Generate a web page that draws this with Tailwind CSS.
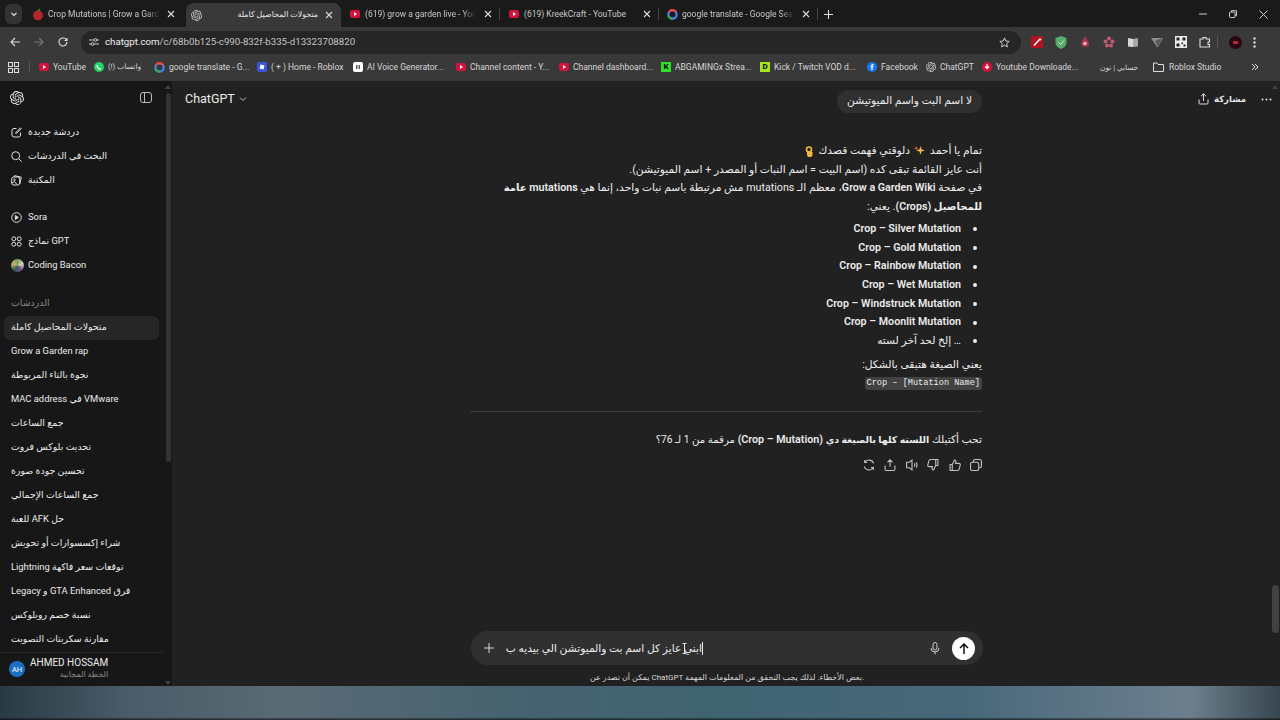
<!DOCTYPE html>
<html>
<head>
<meta charset="utf-8">
<script src="https://cdn.jsdelivr.net/npm/@tailwindcss/browser@4"></script>
<title>ChatGPT</title>
</head>
<body class="w-[1280px] h-[720px] overflow-hidden bg-[#1b1b1b] text-[#e6e6e6] [font-family:'Roboto','DejaVu_Sans',sans-serif]">

<!-- tab strip -->
<div class="h-[27px] flex items-start bg-[#1a1a1a] text-[8.5px] text-[#c8c8c8] pt-[3px]">
  <div class="w-[29px] h-[22px] flex items-center pl-[5px]"><div class="w-[17px] h-[20px] rounded-[6px] bg-[#333] flex items-center justify-center"><svg width="8" height="8" viewBox="0 0 8 8" fill="none" stroke="#ddd" stroke-width="1.2"><path d="M1.500 3l2.500 2.500L6.500 3"/></svg></div></div>
  <div class="w-[157px] h-[22px] flex items-center pl-[3px]">
    <svg width="12" height="13" viewBox="0 0 12 13" class="mr-[4px]"><circle cx="6" cy="7.500" r="5" fill="#b3262b"/><path d="M6 3l2-2" stroke="#4a8a2a" stroke-width="1.500"/></svg>
    <span class="w-[112px] whitespace-nowrap [mask-image:linear-gradient(90deg,#000_88%,transparent)]">Crop Mutations | Grow a Garde</span>
    <svg width="8" height="8" viewBox="0 0 8 8" stroke="#ddd" stroke-width="1.100" class="ml-[7px]"><path d="M1 1l6 6M7 1L1 7"/></svg>
  </div>
  <div class="w-[155px] h-[24px] flex items-center pl-[5px] bg-[#393939] rounded-t-[8px]">
    <svg width="11" height="11" viewBox="0 0 24 24" fill="#cfcfcf"><path d="M22.2819 9.8211a5.9847 5.9847 0 0 0-.5157-4.9108 6.0462 6.0462 0 0 0-6.5098-2.9A6.0651 6.0651 0 0 0 4.9807 4.1818a5.9847 5.9847 0 0 0-3.9977 2.9 6.0462 6.0462 0 0 0 .7427 7.0966 5.98 5.98 0 0 0 .511 4.9107 6.051 6.051 0 0 0 6.5146 2.9001A5.9847 5.9847 0 0 0 13.2599 24a6.0557 6.0557 0 0 0 5.7718-4.2058 5.9894 5.9894 0 0 0 3.9977-2.9001 6.0557 6.0557 0 0 0-.7475-7.0729zm-9.022 12.6081a4.4755 4.4755 0 0 1-2.8764-1.0408l.1419-.0804 4.7783-2.7582a.7948.7948 0 0 0 .3927-.6813v-6.7369l2.02 1.1686a.071.071 0 0 1 .038.052v5.5826a4.504 4.504 0 0 1-4.4945 4.4944zm-9.6607-4.1254a4.4708 4.4708 0 0 1-.5346-3.0137l.142.0852 4.783 2.7582a.7712.7712 0 0 0 .7806 0l5.8428-3.3685v2.3324a.0804.0804 0 0 1-.0332.0615L9.74 19.9502a4.4992 4.4992 0 0 1-6.1408-1.6464zM2.3408 7.8956a4.485 4.485 0 0 1 2.3655-1.9728V11.6a.7664.7664 0 0 0 .3879.6765l5.8144 3.3543-2.0201 1.1685a.0757.0757 0 0 1-.071 0l-4.8303-2.7865A4.504 4.504 0 0 1 2.3408 7.872zm16.5963 3.8558L13.1038 8.364 15.1192 7.2a.0757.0757 0 0 1 .071 0l4.8303 2.7913a4.4944 4.4944 0 0 1-.6765 8.1042v-5.6772a.79.79 0 0 0-.407-.667zm2.0107-3.0231l-.142-.0852-4.7735-2.7818a.7759.7759 0 0 0-.7854 0L9.409 9.2297V6.8974a.0662.0662 0 0 1 .0284-.0615l4.8303-2.7866a4.4992 4.4992 0 0 1 6.6802 4.66zM8.3065 12.863l-2.02-1.1638a.0804.0804 0 0 1-.038-.0567V6.0742a4.4992 4.4992 0 0 1 7.3757-3.4537l-.142.0805L8.704 5.459a.7948.7948 0 0 0-.3927.6813zm1.0976-2.3654l2.602-1.4998 2.6069 1.4998v2.9994l-2.5974 1.4997-2.6067-1.4997Z"/></svg>
    <span dir="rtl" class="w-[116px] text-[#e8e8e8] whitespace-nowrap text-[7.9px]">متحولات المحاصيل كاملة</span>
    <svg width="8" height="8" viewBox="0 0 8 8" stroke="#ddd" stroke-width="1.100" class="ml-[7px]"><path d="M1 1l6 6M7 1L1 7"/></svg>
  </div>
  <div class="w-[159px] h-[22px] flex items-center pl-[9px]">
    <svg width="10" height="8" viewBox="0 0 10 8" class="mr-[5px]"><rect width="10" height="8" rx="2" fill="#d5123b"/><path d="M4 2l3 2-3 2z" fill="#fff"/></svg>
    <span class="w-[111px] whitespace-nowrap [mask-image:linear-gradient(90deg,#000_88%,transparent)]">(619) grow a garden live - YouT</span>
    <svg width="8" height="8" viewBox="0 0 8 8" stroke="#ddd" stroke-width="1.100" class="ml-[8px]"><path d="M1 1l6 6M7 1L1 7"/></svg>
    <span class="ml-auto w-[1px] h-[12px] bg-[#444]"></span>
  </div>
  <div class="w-[159px] h-[22px] flex items-center pl-[9px]">
    <svg width="10" height="8" viewBox="0 0 10 8" class="mr-[5px]"><rect width="10" height="8" rx="2" fill="#d5123b"/><path d="M4 2l3 2-3 2z" fill="#fff"/></svg>
    <span class="w-[118px] whitespace-nowrap">(619) KreekCraft - YouTube</span>
    <svg width="8" height="8" viewBox="0 0 8 8" stroke="#ddd" stroke-width="1.100" class="ml-[1px]"><path d="M1 1l6 6M7 1L1 7"/></svg>
    <span class="ml-auto w-[1px] h-[12px] bg-[#444]"></span>
  </div>
  <div class="w-[159px] h-[22px] flex items-center pl-[8px]">
    <svg width="11" height="11" viewBox="0 0 12 12" class="mr-[4px]"><circle cx="6" cy="6" r="4.500" fill="none" stroke="#4285f4" stroke-width="2.400"/><path d="M2 3.500A4.500 4.500 0 0 1 10 3.500" fill="none" stroke="#ea4335" stroke-width="2.400"/><path d="M1.600 7.500A4.500 4.500 0 0 0 6 10.500" fill="none" stroke="#34a853" stroke-width="2.400"/></svg>
    <span class="w-[112px] whitespace-nowrap [mask-image:linear-gradient(90deg,#000_88%,transparent)]">google translate - Google Sean</span>
    <svg width="8" height="8" viewBox="0 0 8 8" stroke="#ddd" stroke-width="1.100" class="ml-[8px]"><path d="M1 1l6 6M7 1L1 7"/></svg>
    <span class="ml-auto w-[1px] h-[12px] bg-[#444]"></span>
  </div>
  <div class="h-[22px] flex items-center pl-[6px]"><svg width="9" height="9" viewBox="0 0 9 9" stroke="#ddd" stroke-width="1.100"><path d="M4.500 0v9M0 4.500h9"/></svg></div>
  <div class="ml-auto h-[22px] flex items-center pr-[12px] gap-[22px]">
    <svg width="8" height="8" viewBox="0 0 8 8" stroke="#ccc"><path d="M0 4h8"/></svg>
    <svg width="8" height="8" viewBox="0 0 8 8" stroke="#ccc" fill="none"><rect x=".5" y="2" width="5.500" height="5.500" rx="1"/><path d="M2.500 2V.7h5v5H6"/></svg>
    <svg width="9" height="9" viewBox="0 0 9 9" stroke="#ccc"><path d="M.5.5l8 8M8.500.5l-8 8"/></svg>
  </div>
</div>

<!-- toolbar -->
<div class="h-[28px] bg-[#393939] flex items-center pt-[2px]">
  <div class="w-[81px] flex items-center pl-[10px] gap-[14px]">
    <svg width="10" height="10" viewBox="0 0 10 10" stroke="#ddd" fill="none" stroke-width="1.100"><path d="M10 5H1M5 1L1 5l4 4"/></svg>
    <svg width="10" height="10" viewBox="0 0 10 10" stroke="#777" fill="none" stroke-width="1.100"><path d="M0 5h9M5 1l4 4-4 4"/></svg>
    <svg width="10" height="10" viewBox="0 0 10 10" stroke="#ddd" fill="none" stroke-width="1.100"><path d="M8.600 3.200A4 4 0 1 0 9 5M9 1v2.500H6.500"/></svg>
  </div>
  <div class="w-[940px] h-[23px] rounded-full bg-[#262626] flex items-center pl-[5px]">
    <svg width="12" height="12" viewBox="0 0 12 12" stroke="#ccc" fill="none" class="mr-[5px] ml-[2px]"><path d="M1 4h5M9 4h2M1 8h2M6 8h5"/><circle cx="7.500" cy="4" r="1.400"/><circle cx="4.500" cy="8" r="1.400"/></svg>
    <span class="text-[9.7px] text-[#c4c4c4]"><span class="text-[#f0f0f0]">chatgpt.com</span>/c/68b0b125-c990-832f-b335-d13323708820</span>
    <svg width="11" height="11" viewBox="0 0 12 12" stroke="#ddd" fill="none" class="ml-auto mr-[11px]"><path d="M6 1l1.500 3.400 3.600.4-2.700 2.400.8 3.600L6 9l-3.200 1.800.8-3.600L.9 4.800l3.600-.4z"/></svg>
  </div>
  <div class="flex items-center flex-1 pl-[10px]">
    <div class="w-[24px]"><svg width="12" height="12" viewBox="0 0 12 12"><rect width="12" height="12" rx="1" fill="#b3121f"/><path d="M3 9.500L8 4" stroke="#fff" stroke-width="1.500"/><path d="M9 1.500l.6 1.400L11 3.500l-1.400.6L9 5.500l-.6-1.400L7 3.500l1.400-.6z" fill="#fff"/></svg></div>
    <div class="w-[24px]"><svg width="12" height="13" viewBox="0 0 12 13"><path d="M6 0l5.500 2v4.500C11.500 10 8.500 12 6 13 3.500 12 .5 10 .5 6.500V2z" fill="#56ad6a"/><path d="M3.500 6.500l2 2 3.500-4" fill="none" stroke="#d8f0dc"/></svg></div>
    <div class="w-[24px]"><svg width="12" height="12" viewBox="0 0 12 12"><path d="M6 0l4 7a4 4 0 1 1-8 0z" fill="#a8344f"/><circle cx="6" cy="7.500" r="1.800" fill="#e8b4c0"/></svg></div>
    <div class="w-[24px]"><svg width="12" height="12" viewBox="0 0 12 12" fill="#c05a72"><circle cx="6" cy="2.500" r="2"/><circle cx="2.500" cy="5.500" r="2"/><circle cx="9.500" cy="5.500" r="2"/><circle cx="4" cy="9.500" r="2"/><circle cx="8" cy="9.500" r="2"/></svg></div>
    <div class="w-[24px]"><svg width="12" height="11" viewBox="0 0 12 11"><path d="M1 1l5 1v8l-5-.5z" fill="#d8d8d8"/><path d="M6 2l5-1v8.500L6 10z" fill="#a8a8a8"/></svg></div>
    <div class="w-[24px]"><svg width="12" height="11" viewBox="0 0 12 11"><path d="M0 1h12L7 10H6z" fill="#8e8e8e"/><path d="M4 4l7-3-4 9z" fill="#5a5a5a"/></svg></div>
    <div class="w-[24px]"><svg width="12" height="12" viewBox="0 0 12 12"><rect width="12" height="12" fill="#ececec"/><path d="M1.500 1.500h3v3h-3zM7.500 1.500h3v3h-3zM1.500 7.500h3v3h-3zM6.500 6.500h1.500v1.500h-1.500zM8.500 8.500h2v2h-2z" fill="#222"/></svg></div>
    <div class="w-[18px]"><svg width="12" height="12" viewBox="0 0 12 12" stroke="#ddd" fill="none" stroke-width="1.100"><path d="M1 3h3V1.500h3V3h3.500v3H9v2.500h1.500V11H1z"/></svg></div>
    <div class="w-[1px] h-[12px] bg-[#555] mr-[11px]"></div>
    <div class="w-[24px]"><span class="w-[13px] h-[13px] rounded-full bg-[#2b0711] flex items-center justify-center"><span class="w-[5px] h-[3px] bg-[#b02a3a]"></span></span></div>
    <svg width="3" height="11" viewBox="0 0 3 11" fill="#ddd"><circle cx="1.500" cy="1.500" r="1.200"/><circle cx="1.500" cy="5.500" r="1.200"/><circle cx="1.500" cy="9.500" r="1.200"/></svg>
  </div>
</div>

<!-- bookmarks -->
<div class="h-[26px] bg-[#393939] flex items-center text-[8.5px] text-[#d6d6d6] whitespace-nowrap pb-[2px]">
  <div class="w-[29px] pl-[8px]"><svg width="11" height="11" viewBox="0 0 11 11" fill="none" stroke="#ddd"><rect x=".5" y=".5" width="4" height="4"/><rect x="6.500" y=".5" width="4" height="4"/><rect x=".5" y="6.500" width="4" height="4"/><rect x="6.500" y="6.500" width="4" height="4"/></svg></div>
  <div class="w-[1px] h-[12px] bg-[#555] mr-[9px]"></div>
  <div class="w-[55px] flex items-center gap-[4px]"><svg width="10" height="8" viewBox="0 0 10 8"><rect width="10" height="8" rx="2" fill="#d5123b"/><path d="M4 2l3 2-3 2z" fill="#fff"/></svg>YouTube</div>
  <div class="w-[60px] flex items-center gap-[4px]"><svg width="10" height="10" viewBox="0 0 10 10"><circle cx="5" cy="5" r="5" fill="#25d366"/><path d="M3 3c0 2.500 1.500 4 4 4" fill="none" stroke="#fff" stroke-width="1.300"/></svg><span dir="rtl" class="text-[7.6px]">واتساب (!)</span></div>
  <div class="w-[103px] flex items-center gap-[4px]"><svg width="11" height="11" viewBox="0 0 12 12"><circle cx="6" cy="6" r="4.500" fill="none" stroke="#4285f4" stroke-width="2.400"/><path d="M2 3.500A4.500 4.500 0 0 1 10 3.500" fill="none" stroke="#ea4335" stroke-width="2.400"/><path d="M1.600 7.500A4.500 4.500 0 0 0 6 10.500" fill="none" stroke="#34a853" stroke-width="2.400"/></svg>google translate - G...</div>
  <div class="w-[96px] flex items-center gap-[4px]"><svg width="10" height="10" viewBox="0 0 10 10"><rect width="10" height="10" rx="2" fill="#3b55d9"/><rect x="3" y="3" width="4" height="4" fill="#fff" transform="rotate(15 5 5)"/></svg>( + ) Home - Roblox</div>
  <div class="w-[103px] flex items-center gap-[4px]"><svg width="10" height="10" viewBox="0 0 10 10"><rect width="10" height="10" rx="2" fill="#fff"/><path d="M3.800 3v4M6.200 3v4" stroke="#111"/></svg>AI Voice Generator...</div>
  <div class="w-[103px] flex items-center gap-[4px]"><svg width="10" height="8" viewBox="0 0 10 8"><rect width="10" height="8" rx="2" fill="#d5123b"/><path d="M4 2l3 2-3 2z" fill="#fff"/></svg>Channel content - Y...</div>
  <div class="w-[102px] flex items-center gap-[4px]"><svg width="10" height="8" viewBox="0 0 10 8"><rect width="10" height="8" rx="2" fill="#d5123b"/><path d="M4 2l3 2-3 2z" fill="#fff"/></svg>Channel dashboard...</div>
  <div class="w-[99px] flex items-center gap-[4px]"><span class="w-[10px] h-[10px] bg-[#2fe02a] text-black text-[8px] font-bold leading-[10px] text-center">K</span>ABGAMINGx Strea...</div>
  <div class="w-[107px] flex items-center gap-[4px]"><span class="w-[10px] h-[10px] bg-[#a5e51f] text-black text-[8px] font-bold leading-[10px] text-center">D</span>Kick / Twitch VOD d...</div>
  <div class="w-[59px] flex items-center gap-[4px]"><span class="w-[10px] h-[10px] rounded-full bg-[#1877f2] text-white text-[8px] font-bold leading-[11px] text-center">f</span>Facebook</div>
  <div class="w-[56px] flex items-center gap-[4px]"><svg width="10" height="10" viewBox="0 0 24 24" fill="#cfcfcf"><path d="M22.2819 9.8211a5.9847 5.9847 0 0 0-.5157-4.9108 6.0462 6.0462 0 0 0-6.5098-2.9A6.0651 6.0651 0 0 0 4.9807 4.1818a5.9847 5.9847 0 0 0-3.9977 2.9 6.0462 6.0462 0 0 0 .7427 7.0966 5.98 5.98 0 0 0 .511 4.9107 6.051 6.051 0 0 0 6.5146 2.9001A5.9847 5.9847 0 0 0 13.2599 24a6.0557 6.0557 0 0 0 5.7718-4.2058 5.9894 5.9894 0 0 0 3.9977-2.9001 6.0557 6.0557 0 0 0-.7475-7.0729zm-9.022 12.6081a4.4755 4.4755 0 0 1-2.8764-1.0408l.1419-.0804 4.7783-2.7582a.7948.7948 0 0 0 .3927-.6813v-6.7369l2.02 1.1686a.071.071 0 0 1 .038.052v5.5826a4.504 4.504 0 0 1-4.4945 4.4944zm-9.6607-4.1254a4.4708 4.4708 0 0 1-.5346-3.0137l.142.0852 4.783 2.7582a.7712.7712 0 0 0 .7806 0l5.8428-3.3685v2.3324a.0804.0804 0 0 1-.0332.0615L9.74 19.9502a4.4992 4.4992 0 0 1-6.1408-1.6464zM2.3408 7.8956a4.485 4.485 0 0 1 2.3655-1.9728V11.6a.7664.7664 0 0 0 .3879.6765l5.8144 3.3543-2.0201 1.1685a.0757.0757 0 0 1-.071 0l-4.8303-2.7865A4.504 4.504 0 0 1 2.3408 7.872zm16.5963 3.8558L13.1038 8.364 15.1192 7.2a.0757.0757 0 0 1 .071 0l4.8303 2.7913a4.4944 4.4944 0 0 1-.6765 8.1042v-5.6772a.79.79 0 0 0-.407-.667zm2.0107-3.0231l-.142-.0852-4.7735-2.7818a.7759.7759 0 0 0-.7854 0L9.409 9.2297V6.8974a.0662.0662 0 0 1 .0284-.0615l4.8303-2.7866a4.4992 4.4992 0 0 1 6.6802 4.66zM8.3065 12.863l-2.02-1.1638a.0804.0804 0 0 1-.038-.0567V6.0742a4.4992 4.4992 0 0 1 7.3757-3.4537l-.142.0805L8.704 5.459a.7948.7948 0 0 0-.3927.6813zm1.0976-2.3654l2.602-1.4998 2.6069 1.4998v2.9994l-2.5974 1.4997-2.6067-1.4997Z"/></svg>ChatGPT</div>
  <div class="w-[113px] flex items-center gap-[4px]"><svg width="10" height="10" viewBox="0 0 10 10"><circle cx="5" cy="5" r="5" fill="#d5123b"/><path d="M5 2v4M3 4.500l2 2 2-2" fill="none" stroke="#fff" stroke-width="1.200"/></svg>Youtube Downloade...</div>
  <div class="w-[58px] pl-[5px]"><span dir="rtl" class="text-[7.4px]">حسابي | نون</span></div>
  <div class="w-[98px] flex items-center gap-[5px]"><svg width="11" height="10" viewBox="0 0 11 10" fill="none" stroke="#ddd"><path d="M.5 1h3.500l1 1.500h5.500v7H.5z"/></svg>Roblox Studio</div>
  <svg width="8" height="8" viewBox="0 0 8 8" fill="none" stroke="#ddd"><path d="M1 1l3 3-3 3M4 1l3 3-3 3"/></svg>
</div>

<div class="flex h-[605px]">
  <!-- sidebar -->
  <aside class="w-[172px] shrink-0 bg-[#171717] relative text-[9.4px] text-[#ececec] flex flex-col">
    <div class="h-[34px] flex items-center pl-[10px] pr-[20px] justify-between pt-[1px]">
      <svg width="14" height="14" viewBox="0 0 24 24" fill="#e8e8e8"><path d="M22.2819 9.8211a5.9847 5.9847 0 0 0-.5157-4.9108 6.0462 6.0462 0 0 0-6.5098-2.9A6.0651 6.0651 0 0 0 4.9807 4.1818a5.9847 5.9847 0 0 0-3.9977 2.9 6.0462 6.0462 0 0 0 .7427 7.0966 5.98 5.98 0 0 0 .511 4.9107 6.051 6.051 0 0 0 6.5146 2.9001A5.9847 5.9847 0 0 0 13.2599 24a6.0557 6.0557 0 0 0 5.7718-4.2058 5.9894 5.9894 0 0 0 3.9977-2.9001 6.0557 6.0557 0 0 0-.7475-7.0729zm-9.022 12.6081a4.4755 4.4755 0 0 1-2.8764-1.0408l.1419-.0804 4.7783-2.7582a.7948.7948 0 0 0 .3927-.6813v-6.7369l2.02 1.1686a.071.071 0 0 1 .038.052v5.5826a4.504 4.504 0 0 1-4.4945 4.4944zm-9.6607-4.1254a4.4708 4.4708 0 0 1-.5346-3.0137l.142.0852 4.783 2.7582a.7712.7712 0 0 0 .7806 0l5.8428-3.3685v2.3324a.0804.0804 0 0 1-.0332.0615L9.74 19.9502a4.4992 4.4992 0 0 1-6.1408-1.6464zM2.3408 7.8956a4.485 4.485 0 0 1 2.3655-1.9728V11.6a.7664.7664 0 0 0 .3879.6765l5.8144 3.3543-2.0201 1.1685a.0757.0757 0 0 1-.071 0l-4.8303-2.7865A4.504 4.504 0 0 1 2.3408 7.872zm16.5963 3.8558L13.1038 8.364 15.1192 7.2a.0757.0757 0 0 1 .071 0l4.8303 2.7913a4.4944 4.4944 0 0 1-.6765 8.1042v-5.6772a.79.79 0 0 0-.407-.667zm2.0107-3.0231l-.142-.0852-4.7735-2.7818a.7759.7759 0 0 0-.7854 0L9.409 9.2297V6.8974a.0662.0662 0 0 1 .0284-.0615l4.8303-2.7866a4.4992 4.4992 0 0 1 6.6802 4.66zM8.3065 12.863l-2.02-1.1638a.0804.0804 0 0 1-.038-.0567V6.0742a4.4992 4.4992 0 0 1 7.3757-3.4537l-.142.0805L8.704 5.459a.7948.7948 0 0 0-.3927.6813zm1.0976-2.3654l2.602-1.4998 2.6069 1.4998v2.9994l-2.5974 1.4997-2.6067-1.4997Z"/></svg>
      <svg width="12" height="11" viewBox="0 0 12 11" fill="none" stroke="#bbb"><rect x=".5" y=".5" width="11" height="10" rx="2.500"/><path d="M4.500.5v10"/></svg>
    </div>
    <div class="pt-[7px] flex flex-col">
      <div class="h-[24px] flex items-center pl-[11px] gap-[6px]"><svg width="11" height="11" viewBox="0 0 11 11" fill="none" stroke="#e0e0e0"><path d="M5.500 1.500H3A2 2 0 0 0 1 3.500v4.500a2 2 0 0 0 2 2h4.500a2 2 0 0 0 2-2V5.500"/><path d="M9.500.8l.8.8-4.500 4.500-1.100.3.300-1.100z"/></svg><span dir="rtl">دردشة جديدة</span></div>
      <div class="h-[24px] flex items-center pl-[11px] gap-[6px]"><svg width="11" height="11" viewBox="0 0 11 11" fill="none" stroke="#e0e0e0"><circle cx="4.700" cy="4.700" r="4"/><path d="M7.700 7.700l3 3"/></svg><span dir="rtl">البحث في الدردشات</span></div>
      <div class="h-[24px] flex items-center pl-[11px] gap-[6px]"><svg width="11" height="11" viewBox="0 0 11 11" fill="none" stroke="#e0e0e0"><rect x=".7" y="2" width="8" height="8" rx="2"/><path d="M3 2l.5-1.300 6.800 1.500-1.500 6.800"/><circle cx="3.500" cy="4.800" r=".8"/><path d="M1 8l2.500-1.500L6 9.500"/></svg><span dir="rtl">المكتبة</span></div>
      <div class="h-[13px]"></div>
      <div class="h-[24px] flex items-center pl-[11px] gap-[6px]"><svg width="11" height="11" viewBox="0 0 11 11" fill="none" stroke="#e0e0e0"><circle cx="5.500" cy="5.500" r="4.800"/><path d="M4.300 3.500v4l3-2z" fill="#e0e0e0"/></svg>Sora</div>
      <div class="h-[24px] flex items-center pl-[11px] gap-[6px]"><svg width="11" height="11" viewBox="0 0 11 11" fill="none" stroke="#e0e0e0"><circle cx="2.800" cy="2.800" r="2"/><circle cx="8.200" cy="2.800" r="2"/><circle cx="2.800" cy="8.200" r="2"/><circle cx="8.200" cy="8.200" r="2"/></svg><span dir="ltr">نماذج GPT</span></div>
      <div class="h-[24px] flex items-center pl-[11px] gap-[4px]"><span class="w-[13px] h-[13px] rounded-full bg-[conic-gradient(#7aa05a,#d8d0c0,#6a4f8a,#2f5f50,#c8b060,#7aa05a)]"></span>Coding Bacon</div>
      <div class="h-[14px]"></div>
      <div class="h-[24px] flex items-center pl-[11px] text-[#8a8a8a]"><span dir="rtl">الدردشات</span></div>
    </div>
    <div class="flex flex-col px-[4px] [&>div]:h-[24px] [&>div]:flex [&>div]:items-center [&>div]:pl-[7px] [&>div]:rounded-[6px]">
      <div class="bg-[#262626] w-[155px]"><span dir="rtl">متحولات المحاصيل كاملة</span></div>
      <div>Grow a Garden rap</div>
      <div><span dir="rtl">نجوة بالتاء المربوطة</span></div>
      <div><span dir="ltr">MAC address في VMware</span></div>
      <div><span dir="rtl">جمع الساعات</span></div>
      <div><span dir="rtl">تحديث بلوكس فروت</span></div>
      <div><span dir="rtl">تحسين جودة صورة</span></div>
      <div><span dir="rtl">جمع الساعات الإجمالي</span></div>
      <div><span dir="rtl">حل AFK للعبة</span></div>
      <div><span dir="rtl">شراء إكسسوارات أو تحويش</span></div>
      <div><span dir="rtl">توقعات سعر فاكهة Lightning</span></div>
      <div><span dir="rtl">فرق GTA Enhanced و Legacy</span></div>
      <div><span dir="rtl">نسبة خصم روبلوكس</span></div>
      <div><span dir="rtl">مقارنة سكربتات التصويت</span></div>
    </div>
    <div class="mt-auto h-[36px] border-t border-[#262626] flex items-center pl-[9px] gap-[5px] w-[164px]">
      <span class="w-[16px] h-[16px] rounded-full bg-[#1c6fc4] text-white text-[7.5px] flex items-center justify-center">AH</span>
      <div class="flex flex-col items-end leading-[12px]"><span class="text-[10px]">AHMED HOSSAM</span><span dir="rtl" class="text-[8px] text-[#8a8a8a]">الخطة المجانية</span></div>
    </div>
    <!-- sidebar scrollbar -->
    <div class="absolute right-[1px] top-[12px] w-[5px] h-[369px] rounded-full bg-[#333]"></div>
    <svg width="6" height="4" viewBox="0 0 6 4" fill="#444" class="absolute right-[1px] top-[4px]"><path d="M3 0l3 4H0z"/></svg>
    <svg width="6" height="4" viewBox="0 0 6 4" fill="#444" class="absolute right-[1px] bottom-[1px]"><path d="M0 0h6L3 4z"/></svg>
  </aside>

  <!-- main -->
  <main class="flex-1 min-w-0 bg-[#212121] relative flex flex-col text-[10.7px]">
    <div class="h-[35px] flex items-center pt-[5px]">
      <div class="w-[298px] pl-[13px] flex items-center gap-[4px] text-[12.5px] text-[#ececec] -mt-[4px]">ChatGPT <svg width="8" height="8" viewBox="0 0 8 8" fill="none" stroke="#bbb"><path d="M1 2.500l3 3 3-3"/></svg></div>
      <div class="w-[512px] flex justify-end"><div dir="rtl" class="h-[23px] px-[10px] rounded-full bg-[#303030] flex items-center text-[#ececec]">لا اسم البت واسم الميوتيشن</div></div>
      <div class="flex items-center gap-[15px] ml-[216px] -mt-[4px]">
        <div class="flex items-center gap-[5px] font-semibold text-[8.5px]"><svg width="11" height="12" viewBox="0 0 11 12" fill="none" stroke="#e0e0e0"><path d="M5.500 8V1M3 3.200L5.500.8 8 3.200M1 6.500v3.500a1 1 0 0 0 1 1h7a1 1 0 0 0 1-1V6.500"/></svg><span dir="rtl">مشاركة</span></div>
        <svg width="11" height="3" viewBox="0 0 11 3" fill="#e0e0e0"><circle cx="1.500" cy="1.500" r="1"/><circle cx="5.500" cy="1.500" r="1"/><circle cx="9.500" cy="1.500" r="1"/></svg>
      </div>
    </div>

    <div dir="rtl" class="w-[512px] ml-[298px] mt-[26px] leading-[18.7px] text-[#ececec]">
      <p class="flex items-center">تمام يا أحمد <svg width="12" height="12" viewBox="0 0 11 11" class="mx-[4px]"><path d="M6 1l1 3 3 1-3 1-1 3-1-3-3-1 3-1z" fill="#f0b050"/><path d="M2 1l.5 1.500L4 3l-1.500.5L2 5l-.5-1.500L0 3l1.500-.5z" fill="#e86f3f"/></svg> دلوقتي فهمت قصدك <svg width="9" height="11" viewBox="0 0 9 11" class="mr-[4px]"><circle cx="4" cy="3.500" r="2.500" fill="none" stroke="#f2b93b" stroke-width="1.600"/><path d="M2 6h5.500v2.500A2.500 2.500 0 0 1 5 11H4a2 2 0 0 1-2-2z" fill="#f2b93b"/></svg></p>
      <p>أنت عايز القائمة تبقى كده (اسم البيت = اسم النبات أو المصدر + اسم الميوتيشن).</p>
      <p>في صفحة <b class="font-semibold">Grow a Garden Wiki</b>، معظم الـ mutations مش مرتبطة باسم نبات واحد، إنما هي <b class="font-semibold">mutations <span class="text-[10px]">عامة للمحاصيل</span> (Crops)</b>. يعني:</p>
      <ul class="pr-[5px] mt-[3px] font-semibold">
        <li class="flex items-center gap-[12px]"><span class="w-[4px] h-[4px] rounded-full bg-[#ececec]"></span>Crop – Silver Mutation</li>
        <li class="flex items-center gap-[12px]"><span class="w-[4px] h-[4px] rounded-full bg-[#ececec]"></span>Crop – Gold Mutation</li>
        <li class="flex items-center gap-[12px]"><span class="w-[4px] h-[4px] rounded-full bg-[#ececec]"></span>Crop – Rainbow Mutation</li>
        <li class="flex items-center gap-[12px]"><span class="w-[4px] h-[4px] rounded-full bg-[#ececec]"></span>Crop – Wet Mutation</li>
        <li class="flex items-center gap-[12px]"><span class="w-[4px] h-[4px] rounded-full bg-[#ececec]"></span>Crop – Windstruck Mutation</li>
        <li class="flex items-center gap-[12px]"><span class="w-[4px] h-[4px] rounded-full bg-[#ececec]"></span>Crop – Moonlit Mutation</li>
        <li class="flex items-center gap-[12px] font-normal"><span class="w-[4px] h-[4px] rounded-full bg-[#ececec]"></span>… إلخ لحد آخر لسته</li>
      </ul>
      <p class="mt-[5px]">يعني الصيغة هتبقى بالشكل:</p>
      <p class="-mt-[1px]"><code dir="ltr" class="inline-block bg-[#424242] rounded-[3px] px-[2px] leading-[13px] text-[8.6px] [font-family:'Liberation_Mono',monospace]">Crop – [Mutation Name]</code></p>
      <div class="h-[1px] bg-[#3d3d3d] mt-[19px] mb-[19px]"></div>
      <p>تحب أكتبلك <b class="font-semibold"><span class="text-[9.4px]">اللسته كلها بالصيغة دي</span> (Crop – Mutation)</b> <span class="text-[10.2px]">مرقمة من 1 لـ 76؟</span></p>
      <div class="flex items-center gap-[9.5px] mt-[9px]">
        <svg width="12" height="12" viewBox="0 0 11 11" fill="none" stroke="#c0c0c0"><rect x=".5" y="3" width="7.500" height="7.500" rx="1.500"/><path d="M3 3V2a1.500 1.500 0 0 1 1.500-1.500H9A1.500 1.500 0 0 1 10.500 2v4.500A1.500 1.500 0 0 1 9 8H8"/></svg>
        <svg width="12" height="12" viewBox="0 0 11 11" fill="none" stroke="#c0c0c0"><path d="M3 5l2-4c1 0 1.500.8 1.300 1.800L6 4h3.200c.8 0 1.300.7 1.100 1.400l-1 3.800c-.2.800-.8 1.300-1.600 1.300H3zM3 5H1v5.500h2"/></svg>
        <svg width="12" height="12" viewBox="0 0 11 11" fill="none" stroke="#c0c0c0"><path d="M8 6l-2 4c-1 0-1.500-.8-1.300-1.800L5 7H1.800C1 7 .5 6.300.7 5.600l1-3.800C1.900 1 2.500.5 3.300.5H8zM8 6h2V.5H8"/></svg>
        <svg width="12" height="12" viewBox="0 0 11 11" fill="none" stroke="#c0c0c0"><path d="M5.500 1v9L3 8H.5V3H3zM7.500 4c.6.8.6 2.200 0 3M9.300 3c1 1.500 1 3.500 0 5"/></svg>
        <svg width="12" height="12" viewBox="0 0 11 11" fill="none" stroke="#c0c0c0"><path d="M5.500 7V1M3.200 3L5.500.7 7.800 3M1 6v3.500a1 1 0 0 0 1 1h7a1 1 0 0 0 1-1V6"/></svg>
        <svg width="12" height="12" viewBox="0 0 11 11" fill="none" stroke="#c0c0c0"><path d="M9.800 4A4.500 4.500 0 0 0 1.800 3M1.200 7a4.500 4.500 0 0 0 8 1M1.500 1v2.200h2.200M9.500 10V7.800H7.300"/></svg>
      </div>
    </div>

    <div class="mt-auto w-[512px] ml-[299px] h-[34px] rounded-full bg-[#303030] flex items-center pl-[13px] pr-[8px] relative">
      <svg width="10" height="10" viewBox="0 0 10 10" stroke="#d8d8d8"><path d="M5 0v10M0 5h10"/></svg>
      <span dir="rtl" class="w-[198px] ml-[11px] text-[10.7px] text-[#ececec] border-r border-[#ececec] whitespace-nowrap leading-[13px]">ابني عايز كل اسم بت والميوتشن الي بيديه ب</span>
      <svg width="5" height="11" viewBox="0 0 5 11" fill="none" stroke="#e8e8e8" class="absolute left-[211px] top-[12px]"><path d="M.5.5h4M2.500.5v10M.5 10.500h4"/></svg>
      <svg width="10" height="13" viewBox="0 0 10 13" fill="none" stroke="#cfcfcf" class="ml-auto mr-[12px]"><rect x="3" y=".5" width="4" height="7.500" rx="2"/><path d="M1 6a4 4 0 0 0 8 0M5 10v2.500"/></svg>
      <span class="w-[23px] h-[23px] rounded-full bg-white flex items-center justify-center"><svg width="10" height="11" viewBox="0 0 10 11" fill="none" stroke="#111" stroke-width="1.500"><path d="M5 11V1M1 5l4-4 4 4"/></svg></span>
    </div>
    <div class="h-[21px] ml-[299px] w-[512px] text-center text-[8px] leading-[26px] text-[#d8d8d8]" dir="ltr">يمكن أن تصدر عن ChatGPT بعض الأخطاء. لذلك يجب التحقق من المعلومات المهمة.</div>

    <!-- page scrollbar -->
    <div class="absolute right-[1px] top-[504px] w-[7px] h-[48px] rounded-full bg-[#424242]"></div>
    <svg width="6" height="4" viewBox="0 0 6 4" fill="#444" class="absolute right-[2px] top-[4px]"><path d="M3 0l3 4H0z"/></svg>
  </main>
</div>

<!-- desktop wallpaper peeking under the window -->
<div class="h-[34px] bg-[linear-gradient(180deg,transparent_92%,#000a_100%),linear-gradient(90deg,#2a3a45_0%,#4a5c68_10%,#5a6a75_22%,#46636f_40%,#3f6470_55%,#47687a_75%,#6d7f8d_93%,#37464f_100%)]"></div>
</body>
</html>
